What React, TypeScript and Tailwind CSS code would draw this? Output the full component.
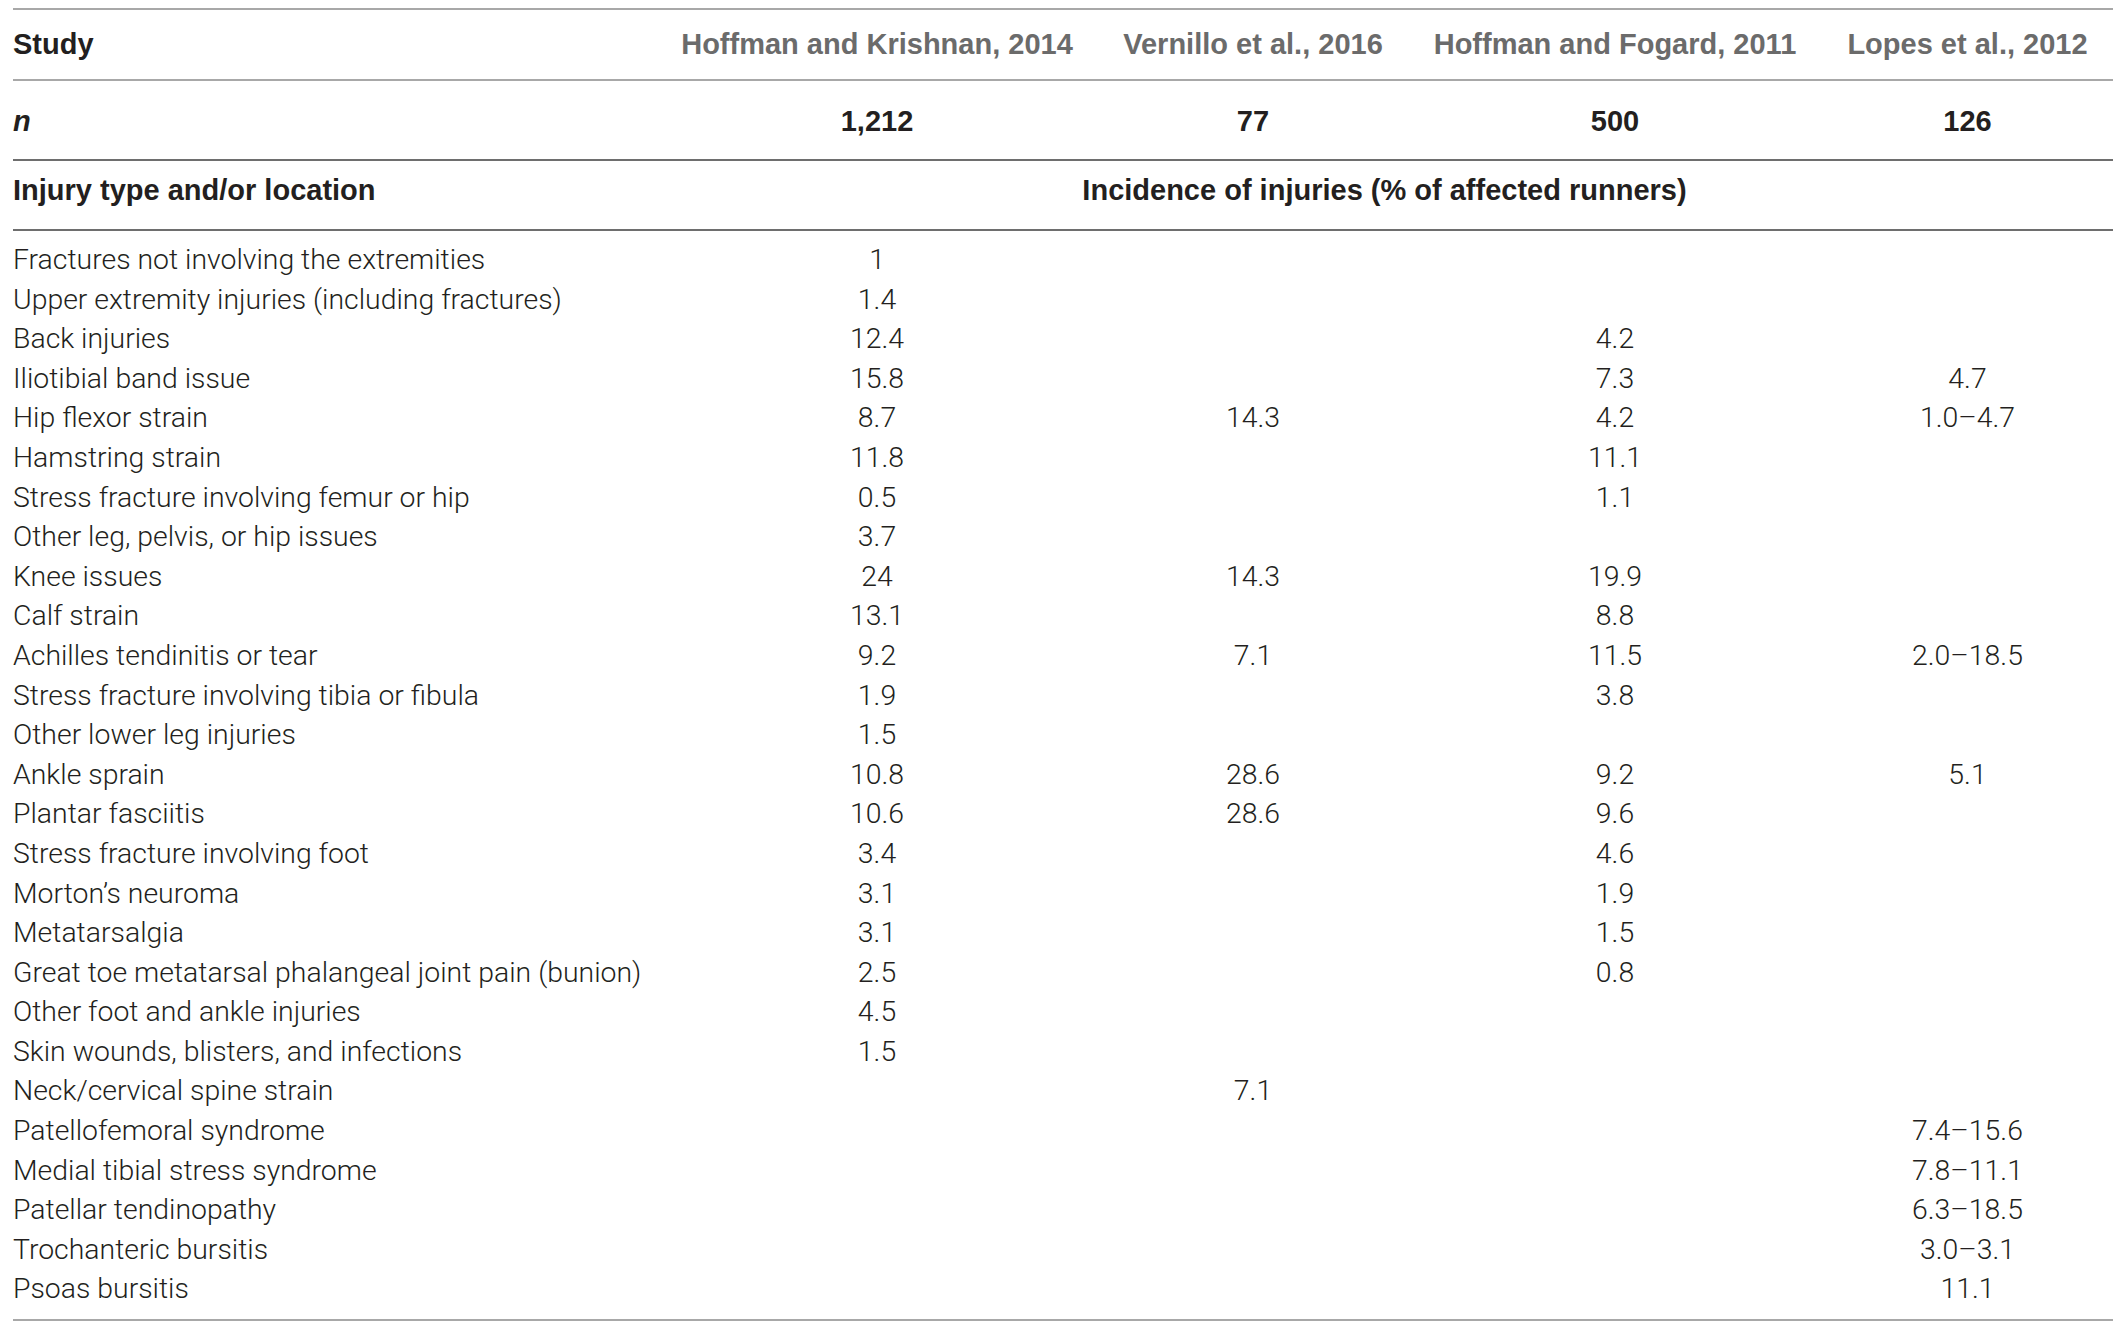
const rows: [string, string, string, string, string][] = [
  ["Fractures not involving the extremities", "1", "", "", ""],
  ["Upper extremity injuries (including fractures)", "1.4", "", "", ""],
  ["Back injuries", "12.4", "", "4.2", ""],
  ["Iliotibial band issue", "15.8", "", "7.3", "4.7"],
  ["Hip flexor strain", "8.7", "14.3", "4.2", "1.0–4.7"],
  ["Hamstring strain", "11.8", "", "11.1", ""],
  ["Stress fracture involving femur or hip", "0.5", "", "1.1", ""],
  ["Other leg, pelvis, or hip issues", "3.7", "", "", ""],
  ["Knee issues", "24", "14.3", "19.9", ""],
  ["Calf strain", "13.1", "", "8.8", ""],
  ["Achilles tendinitis or tear", "9.2", "7.1", "11.5", "2.0–18.5"],
  ["Stress fracture involving tibia or fibula", "1.9", "", "3.8", ""],
  ["Other lower leg injuries", "1.5", "", "", ""],
  ["Ankle sprain", "10.8", "28.6", "9.2", "5.1"],
  ["Plantar fasciitis", "10.6", "28.6", "9.6", ""],
  ["Stress fracture involving foot", "3.4", "", "4.6", ""],
  ["Morton’s neuroma", "3.1", "", "1.9", ""],
  ["Metatarsalgia", "3.1", "", "1.5", ""],
  ["Great toe metatarsal phalangeal joint pain (bunion)", "2.5", "", "0.8", ""],
  ["Other foot and ankle injuries", "4.5", "", "", ""],
  ["Skin wounds, blisters, and infections", "1.5", "", "", ""],
  ["Neck/cervical spine strain", "", "7.1", "", ""],
  ["Patellofemoral syndrome", "", "", "", "7.4–15.6"],
  ["Medial tibial stress syndrome", "", "", "", "7.8–11.1"],
  ["Patellar tendinopathy", "", "", "", "6.3–18.5"],
  ["Trochanteric bursitis", "", "", "", "3.0–3.1"],
  ["Psoas bursitis", "", "", "", "11.1"],
];

const studies = [
  "Hoffman and Krishnan, 2014",
  "Vernillo et al., 2016",
  "Hoffman and Fogard, 2011",
  "Lopes et al., 2012",
];

const counts = ["1,212", "77", "500", "126"];

const cols = "grid grid-cols-[643px_442px_310px_414px_291px]";

export default function App() {
  return (
    <div className="min-h-screen bg-white pt-[8px] pl-[13px]">
      <div className="w-[2100px] font-['Liberation_Sans',Arial,sans-serif] text-[#231f20]">
        {/* Study header */}
        <div className={`${cols} h-[71px] items-center border-t-2 border-[#a8a8a8] text-[29px] font-bold`}>
          <div>Study</div>
          {studies.map((s) => (
            <div key={s} className="text-center text-[#6b6b6b]">
              {s}
            </div>
          ))}
        </div>

        {/* n row */}
        <div className={`${cols} h-[80px] items-center border-t-2 border-[#a8a8a8] pt-[3px] text-[29px] font-bold`}>
          <div className="italic">n</div>
          {counts.map((c) => (
            <div key={c} className="text-center">
              {c}
            </div>
          ))}
        </div>

        {/* injury header */}
        <div className={`${cols} h-[70px] items-center border-t-2 border-[#6e6e6e] pb-[8px] text-[29px] font-bold`}>
          <div>Injury type and/or location</div>
          <div className="col-span-4 text-center">Incidence of injuries (% of affected runners)</div>
        </div>

        {/* data */}
        <div className="border-t-2 border-b-2 border-t-[#6e6e6e] border-b-[#a8a8a8] pt-[9px] pb-[10px] font-['Roboto',sans-serif] text-[28.4px] font-light">
          {rows.map((r) => (
            <div key={r[0]} className={`${cols} h-[39.6px] items-center leading-[39.6px]`}>
              <div className="whitespace-nowrap">{r[0]}</div>
              {r.slice(1).map((v, i) => (
                <div key={i} className="text-center">
                  {v}
                </div>
              ))}
            </div>
          ))}
        </div>
      </div>
    </div>
  );
}
